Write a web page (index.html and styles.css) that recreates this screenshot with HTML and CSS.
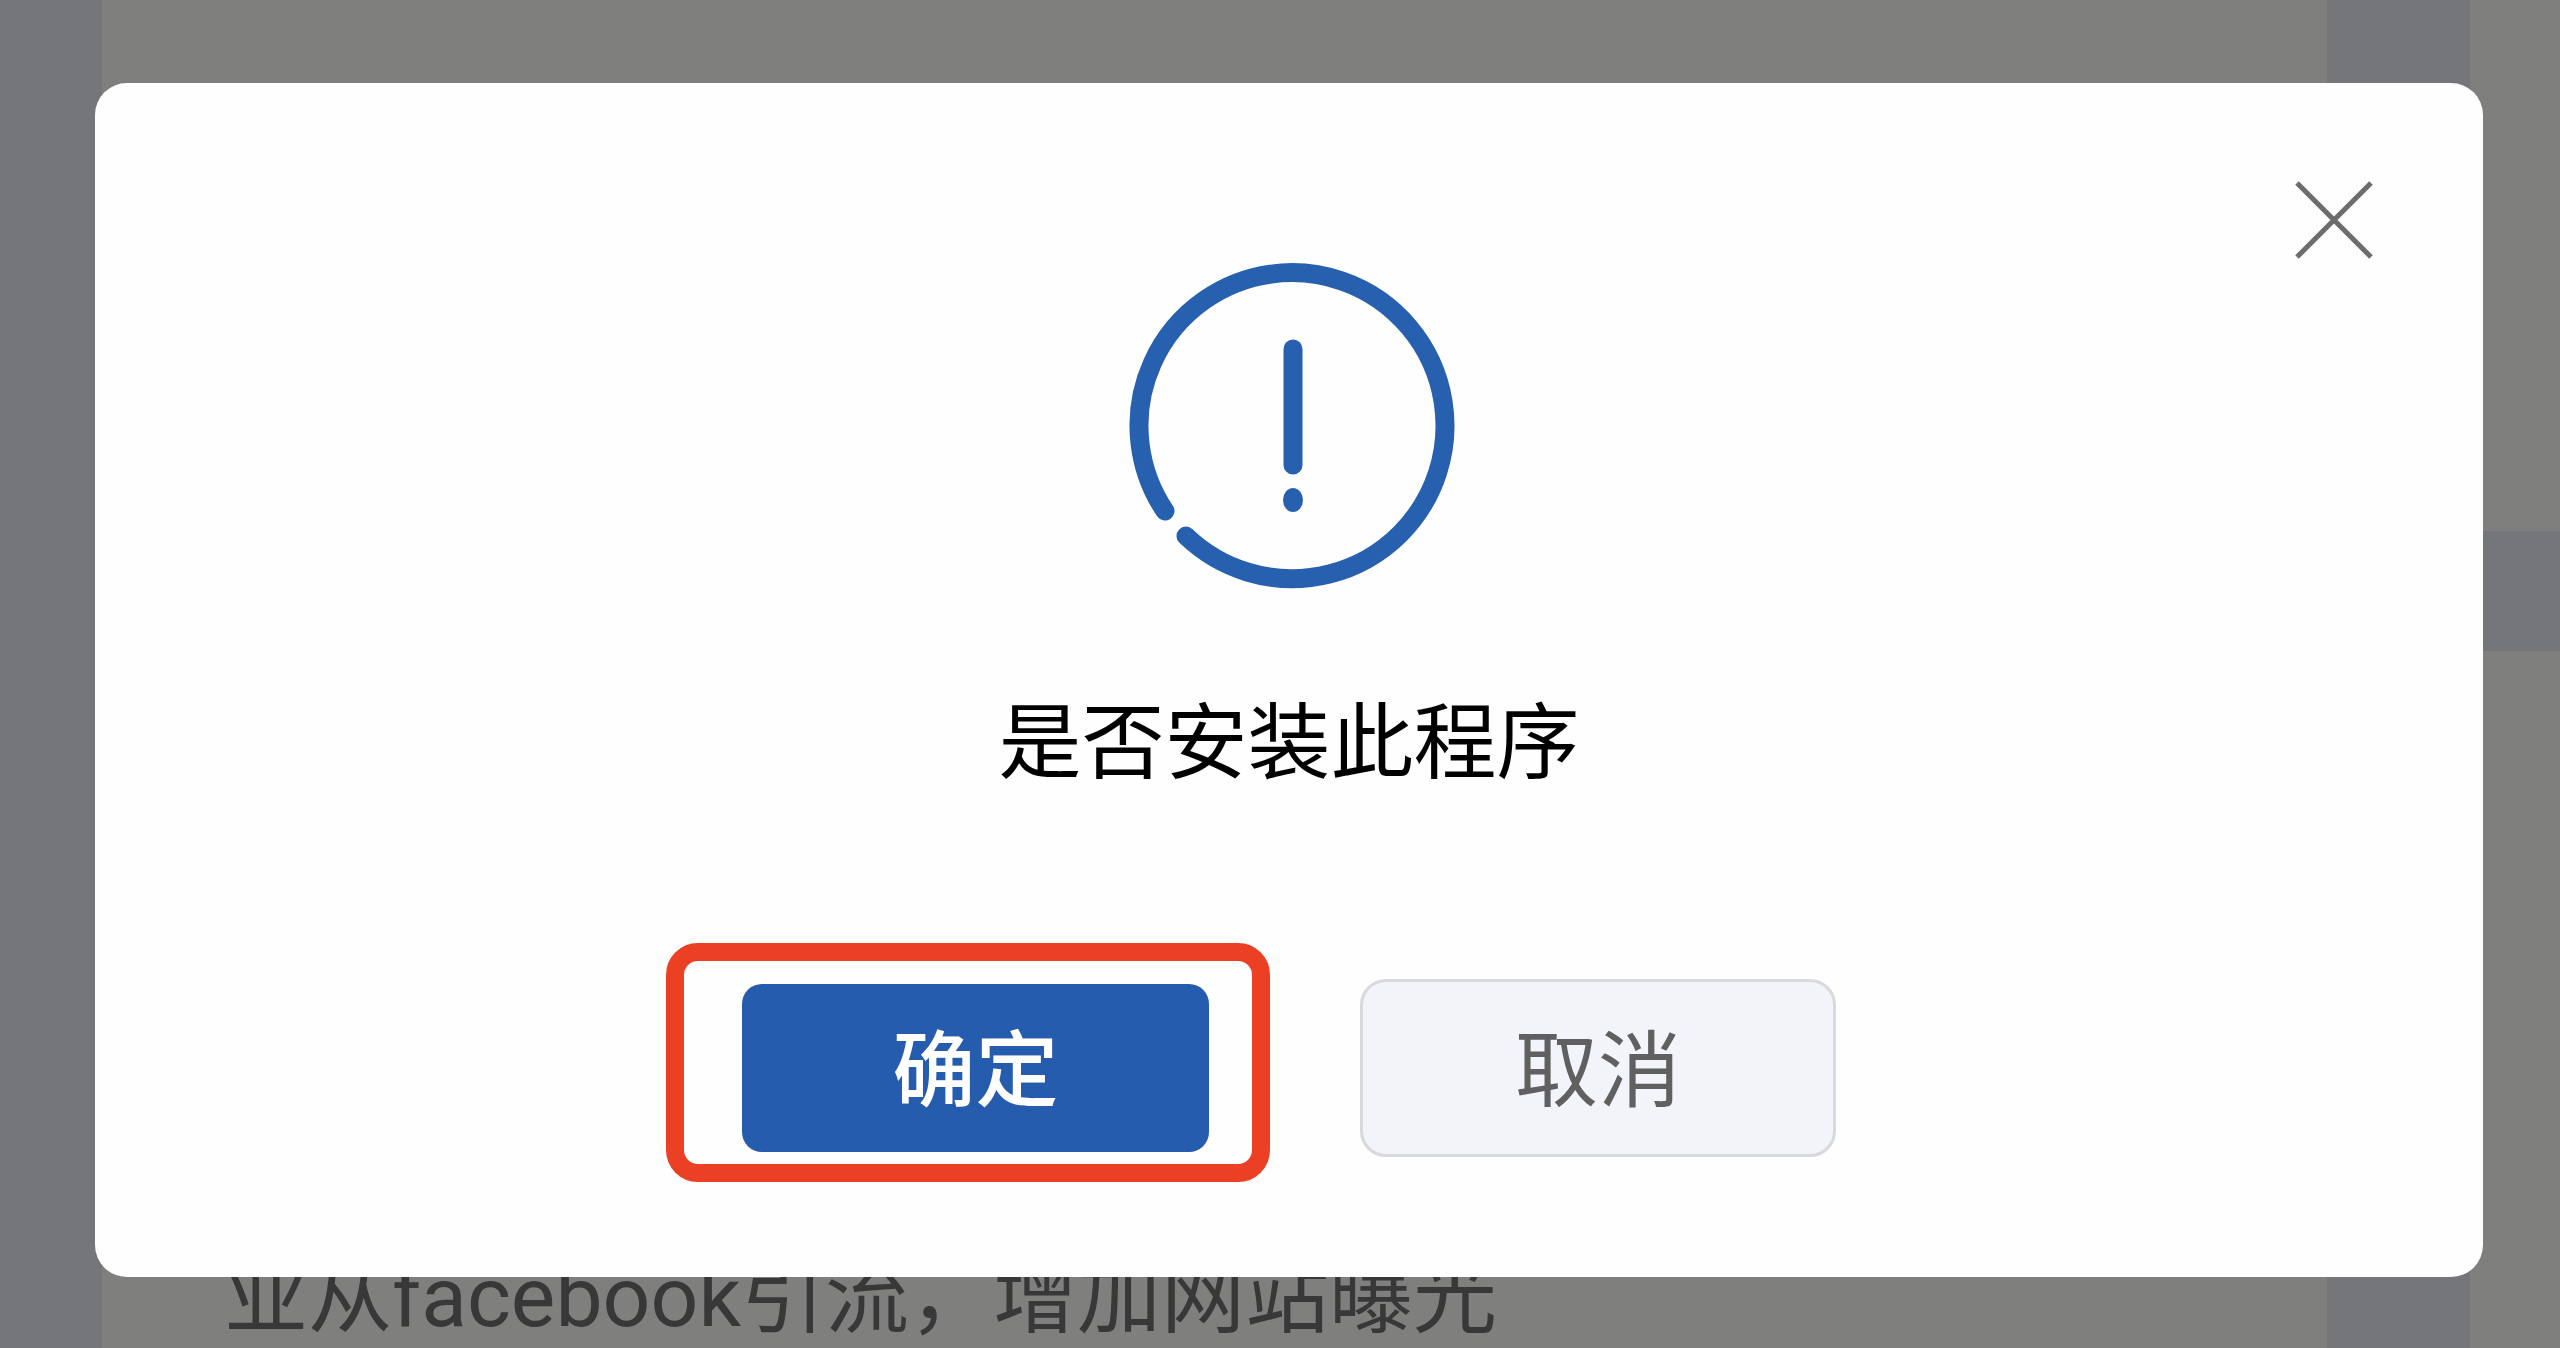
FILE: index.html
```
<!DOCTYPE html>
<html lang="zh-CN">
<head>
<meta charset="utf-8">
<meta name="viewport" content="width=device-width, initial-scale=1">
<title>是否安装此程序</title>
<link rel="stylesheet" href="styles.css">
</head>
<body>
<div class="page">
  <main class="card card-main">
    <p class="card-text">业从facebook引流，增加网站曝光</p>
  </main>
  <aside class="side">
    <div class="card card-top"></div>
    <div class="card card-rest"></div>
  </aside>
</div>
<div class="overlay">
  <section class="dialog" role="dialog" aria-modal="true" aria-labelledby="dialog-title">
    <button class="close" type="button" aria-label="关闭">
      <svg viewBox="0 0 80 80" aria-hidden="true"><path d="M3 3L77 77M77 3L3 77"/></svg>
    </button>
    <svg class="notice" viewBox="-10 0 342 330" aria-hidden="true">
      <path d="M37 249A153 153 0 1 1 58 274"/>
      <path d="M165 87V203"/>
      <ellipse cx="165" cy="238" rx="10" ry="12"/>
    </svg>
    <h1 class="title" id="dialog-title">是否安装此程序</h1>
    <div class="actions">
      <button class="btn btn-primary" type="button">确定</button>
      <button class="btn btn-plain" type="button">取消</button>
    </div>
  </section>
</div>
</body>
</html>
```
FILE: styles.css
```
* {
  box-sizing: border-box;
}

body {
  margin: 0;
  font-family: Roboto, "Noto Sans CJK SC", sans-serif;
  font-size: 84px;
  line-height: 100px;
  background: #ebecf2;
}

.page {
  display: grid;
  grid-template-columns: 1fr 90px;
  gap: 143px;
  min-height: 100vh;
  padding-left: 102px;
}

.card {
  background: #fefefd;
}

.card-main {
  display: flex;
  align-items: flex-end;
  padding: 0 122px;
}

.card-text {
  margin: 0;
  color: #707070;
}

.side {
  display: flex;
  flex-direction: column;
  gap: 120px;
}

.card-top {
  height: 531px;
}

.card-rest {
  flex: 1;
}

.overlay {
  position: fixed;
  inset: 0;
  padding: 83px 77px 0 95px;
  background: rgba(0, 0, 0, 0.5);
}

.dialog {
  position: relative;
  display: flex;
  flex-direction: column;
  align-items: center;
  padding: 179px 40px 120px;
  border-radius: 32px;
  background: #fefefe;
}

.close {
  position: absolute;
  top: 97px;
  right: 109px;
  width: 80px;
  height: 80px;
  padding: 0;
  border: 0;
  background: none;
}

.close svg {
  display: block;
  fill: none;
  stroke: #6c6c6c;
  stroke-width: 5;
}

.notice {
  width: 342px;
  height: 330px;
  fill: none;
  stroke: #2860b0;
  stroke-width: 19;
  stroke-linecap: round;
}

.notice ellipse {
  fill: #2860b0;
  stroke: none;
}

.title {
  margin: 102px 0 185px;
  font-size: 83px;
  font-weight: 400;
  color: #000;
}

.actions {
  display: flex;
  align-items: center;
  gap: 151px;
}

.btn {
  padding: 8px 0 0;
  font: inherit;
  font-size: 83px;
}

.btn-primary {
  position: relative;
  width: 467px;
  height: 168px;
  border: 0;
  border-radius: 20px;
  font-weight: 500;
  color: #fff;
  background: #265cae;
}

/* Highlight frame around the confirm button */
.btn-primary::before {
  content: "";
  position: absolute;
  inset: -41px -61px -30px -76px;
  border: 18px solid #ec4025;
  border-radius: 32px;
}

.btn-plain {
  width: 476px;
  height: 178px;
  border: 3px solid #d8d9da;
  border-radius: 26px;
  color: #606060;
  background: #f2f4f9;
}
```
